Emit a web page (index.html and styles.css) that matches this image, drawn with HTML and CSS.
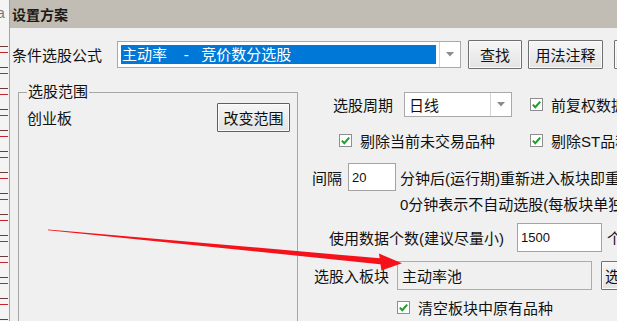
FILE: index.html
```html
<!DOCTYPE html>
<html>
  <head>
    <meta charset="UTF-8" />
    <title>设置方案</title>
    <link rel="stylesheet" href="styles.css">
  </head>
  <body>
    <div class="desk"><span class="desk-glyph">a</span></div>

    <div class="window">
      <div class="titlebar">设置方案</div>

      <div class="dialog">
        <div class="formula-row">
          <span class="formula-label">条件选股公式</span>
          <div class="combo formula-combo">
            <div class="combo-value"><span class="selected">主动率    -   竞价数分选股</span></div>
            <span class="combo-arrow"><svg width="8" height="5" viewBox="0 0 8 5"><polygon points="0,0 8,0 4,4.5" fill="#8c8c8c"/></svg></span>
          </div>
          <button class="btn btn-find">查找</button>
          <button class="btn btn-notes">用法注释</button>
          <button class="btn btn-more"></button>
        </div>

        <div class="main">
          <fieldset class="scope">
            <legend>选股范围</legend>
            <div class="scope-row">
              <span>创业板</span>
              <button class="btn btn-scope">改变范围</button>
            </div>
          </fieldset>

          <div class="options">
            <div class="row period-row">
              <span class="period-label">选股周期</span>
              <div class="combo period-combo">
                <div class="combo-value">日线</div>
                <span class="combo-arrow"><svg width="8" height="5" viewBox="0 0 8 5"><polygon points="0,0 8,0 4,4.5" fill="#8c8c8c"/></svg></span>
              </div>
              <label class="check check-adjust"><span class="box"><svg width="11" height="11" viewBox="0 0 11 11"><path d="M1.8 5.6 L4.3 8.2 L9.2 2.6" fill="none" stroke="#1f9d2a" stroke-width="2"/></svg></span>前复权数据</label>
            </div>

            <div class="row filter-row">
              <label class="check check-idle"><span class="box"><svg width="11" height="11" viewBox="0 0 11 11"><path d="M1.8 5.6 L4.3 8.2 L9.2 2.6" fill="none" stroke="#1f9d2a" stroke-width="2"/></svg></span>剔除当前未交易品种</label>
              <label class="check"><span class="box"><svg width="11" height="11" viewBox="0 0 11 11"><path d="M1.8 5.6 L4.3 8.2 L9.2 2.6" fill="none" stroke="#1f9d2a" stroke-width="2"/></svg></span>剔除ST品种</label>
            </div>

            <div class="row interval-row">
              <span class="interval-label">间隔</span>
              <span class="field interval-field">20</span>
              <span class="interval-text">分钟后(运行期)重新进入板块即重新选股</span>
            </div>

            <div class="row note-row">0分钟表示不自动选股(每板块单独设置)</div>

            <div class="row count-row">
              <span class="count-label">使用数据个数(建议尽量小)</span>
              <span class="field count-field">1500</span>
              <span class="count-unit">个</span>
            </div>

            <div class="row block-row">
              <span class="block-label">选股入板块</span>
              <span class="field block-field">主动率池</span>
              <button class="btn btn-block">选择</button>
            </div>

            <div class="row clear-row">
              <label class="check"><span class="box"><svg width="11" height="11" viewBox="0 0 11 11"><path d="M1.8 5.6 L4.3 8.2 L9.2 2.6" fill="none" stroke="#1f9d2a" stroke-width="2"/></svg></span>清空板块中原有品种</label>
            </div>
          </div>
        </div>
      </div>
    </div>

    <!-- red annotation arrow drawn over the dialog -->
    <svg class="arrow" width="617" height="321" viewBox="0 0 617 321">
      <polygon points="48,229.4 383,258.6 382.4,264.4 48,230.2" fill="#f5121a"/>
      <polygon points="379,253.6 402,263.2 381.4,270.4" fill="#f5121a"/>
    </svg>
  </body>
</html>
```

FILE: styles.css
```css
* {
  box-sizing: border-box;
}

html {
  font-family: "Liberation Sans", "Noto Sans CJK SC", sans-serif;
  font-size: 15px;
  color: #111;
}

body {
  margin: 0;
  width: 617px;
  height: 321px;
  overflow: hidden;
  display: flex;
  background: #f0f0f0;
}

.desk {
  width: 10px;
  flex: none;
  border-right: 1px solid #a3a3a3;
  background:
    repeating-linear-gradient(to bottom, transparent 0 14px, #6d3b3b 14px 15px, transparent 15px 20px, #c4242b 20px 21px) 0 32px / 8px 100% no-repeat,
    #f4f4f4;
  position: relative;
}

.desk-glyph {
  position: absolute;
  left: -3px;
  top: 5px;
  font-size: 14px;
  color: #777;
}

.window {
  flex: 1;
  height: 321px;
  overflow: hidden;
  white-space: nowrap;
}

.titlebar {
  height: 28px;
  padding: 2px 0 0 2px;
  line-height: 26px;
  font-weight: bold;
  font-size: 14px;
  background: #c1bdb4;
  color: #1a1a1a;
}

.dialog {
  background: #f0f0f0;
}

/* first line: formula picker */

.formula-row {
  display: flex;
  align-items: center;
  height: 29px;
  margin-top: 12px;
  padding-left: 2px;
}

.formula-row > * {
  flex: none;
}

.formula-label {
  width: 105px;
}

.combo {
  display: flex;
  background: #fff;
  border: 1px solid #a9a9a9;
}

.combo-value {
  flex: 1;
  display: flex;
  align-items: center;
}

.combo-arrow {
  width: 21px;
  display: flex;
  align-items: center;
  justify-content: center;
  border-left: 1px solid #d4d4d4;
}

.formula-combo {
  width: 344px;
  height: 27px;
}

.formula-combo .combo-value {
  padding: 3px;
}

.selected {
  display: block;
  width: 100%;
  height: 100%;
  line-height: 20px;
  padding-left: 1px;
  background: #0078d7;
  color: #fff;
  white-space: pre;
}

.btn {
  font: inherit;
  color: #111;
  height: 29px;
  padding: 0;
  border: 1px solid #707070;
  border-radius: 1px;
  background: linear-gradient(#f6f6f6, #e3e3e3);
  box-shadow: inset 0 0 0 1px #fbfbfb;
}

.btn-find {
  width: 54px;
  margin-left: 7px;
}

.btn-notes {
  width: 75px;
  margin-left: 6px;
}

.btn-more {
  width: 60px;
  margin-left: 11px;
}

/* lower part */

.main {
  display: flex;
  margin-top: 13px;
}

.scope {
  width: 280px;
  height: 260px;
  margin: 0 0 0 8px;
  padding: 0 7px 0 8px;
  border: 1px solid #a6a6a6;
  flex: none;
}

.scope legend {
  padding: 0 1px;
  line-height: 20px;
}

.scope-row {
  display: flex;
  align-items: center;
  justify-content: space-between;
  margin-top: 1px;
}

.btn-scope {
  width: 73px;
  border-color: #5f5f5f;
}

.options {
  display: flex;
  flex-direction: column;
}

.row {
  display: flex;
  align-items: center;
  flex: none;
}

.row > * {
  flex: none;
}

.check {
  display: flex;
  align-items: center;
}

.box {
  width: 13px;
  height: 13px;
  margin-right: 8px;
  border: 1px solid #8e8e8e;
  background: #fff;
  display: flex;
  align-items: center;
  justify-content: center;
}

.period-row {
  margin-top: 10px;
  height: 25px;
  padding-left: 35px;
}

.period-label {
  width: 71px;
}

.period-combo {
  width: 108px;
  height: 25px;
}

.period-combo .combo-value {
  padding-left: 4px;
}

.check-adjust {
  margin-left: 18px;
}

.filter-row {
  margin-top: 13px;
  height: 20px;
  padding-left: 41px;
}

.check-idle {
  width: 191px;
}

.field {
  display: flex;
  align-items: center;
  height: 100%;
  padding-left: 3px;
  background: #fff;
  border: 1px solid #a3a3a3;
}

.interval-row {
  margin-top: 13px;
  height: 28px;
  padding-left: 14px;
}

.interval-label {
  width: 36px;
}

.interval-field {
  width: 48px;
  font-size: 13px;
}

.interval-text {
  margin-left: 4px;
}

.note-row {
  margin-top: 3px;
  height: 18px;
  padding-left: 102px;
}

.count-row {
  margin-top: 11px;
  height: 29px;
  padding-left: 31px;
}

.count-label {
  width: 188px;
}

.count-field {
  width: 85px;
  font-size: 13px;
}

.count-unit {
  margin-left: 5px;
}

.block-row {
  margin-top: 9px;
  height: 29px;
  padding-left: 16px;
}

.block-label {
  width: 83px;
}

.block-field {
  width: 195px;
  padding-left: 4px;
  background: #f0f0f0;
  border-color: #acacac;
}

.btn-block {
  width: 40px;
  margin-left: 9px;
  padding-left: 3px;
  text-align: left;
}

.clear-row {
  margin-top: 8px;
  height: 18px;
  padding-left: 99px;
}

.arrow {
  position: absolute;
  left: 0;
  top: 0;
  pointer-events: none;
}
```
